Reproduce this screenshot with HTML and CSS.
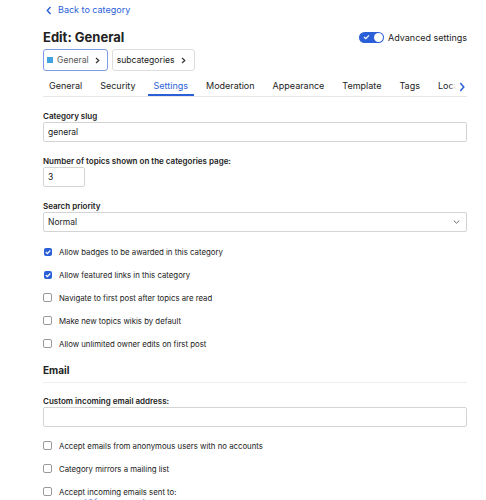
FILE: index.html
```html
<!DOCTYPE html>
<html lang="en">
<head>
  <meta charset="UTF-8" />
  <title>Edit: General</title>
  <link rel="stylesheet" href="styles.css">
</head>
<body>
  <div id="page">
    <a class="back" href="#">
      <svg width="6" height="9" viewBox="0 0 6 9"><path d="M4.5 1 L1.3 4.5 L4.5 8" fill="none" stroke="currentColor" stroke-width="1.4"/></svg>
      Back to category
    </a>

    <div class="header">
      <h1>Edit: General</h1>
      <label class="toggle-row">
        <span class="toggle">
          <svg width="7" height="6" viewBox="0 0 7 6"><path d="M1 3 L2.8 4.7 L6 1.3" fill="none" stroke="#fff" stroke-width="1.2"/></svg>
          <span class="knob"></span>
        </span>
        Advanced settings
      </label>
    </div>

    <div class="crumbs">
      <div class="crumb current">
        <span class="swatch"></span>General
        <svg class="chev" width="5" height="7" viewBox="0 0 5 7"><path d="M1 1 L3.8 3.5 L1 6" fill="none" stroke="#333" stroke-width="1.2"/></svg>
      </div>
      <div class="crumb">subcategories
        <svg class="chev" width="5" height="7" viewBox="0 0 5 7"><path d="M1 1 L3.8 3.5 L1 6" fill="none" stroke="#333" stroke-width="1.2"/></svg>
      </div>
    </div>

    <div class="tabs">
      <div class="tab-list">
        <div class="tab">General</div>
        <div class="tab">Security</div>
        <div class="tab active">Settings</div>
        <div class="tab">Moderation</div>
        <div class="tab">Appearance</div>
        <div class="tab">Template</div>
        <div class="tab">Tags</div>
        <div class="tab">Loca</div>
      </div>
      <div class="tab-more">
        <svg width="6" height="10" viewBox="0 0 6 10"><path d="M1.3 1 L4.8 5 L1.3 9" fill="none" stroke="#2a5fd8" stroke-width="1.5"/></svg>
      </div>
    </div>

    <div class="field">
      <label>Category slug</label>
      <input type="text" value="general" />
    </div>

    <div class="field">
      <label>Number of topics shown on the categories page:</label>
      <input type="text" class="short" value="3" />
    </div>

    <div class="field">
      <label>Search priority</label>
      <div class="select">Normal
        <svg width="7" height="4" viewBox="0 0 7 4"><path d="M0.8 0.6 L3.5 3.2 L6.2 0.6" fill="none" stroke="#666" stroke-width="1"/></svg>
      </div>
    </div>

    <div class="checks">
      <label class="check"><input type="checkbox" checked /> Allow badges to be awarded in this category</label>
      <label class="check"><input type="checkbox" checked /> Allow featured links in this category</label>
      <label class="check"><input type="checkbox" /> Navigate to first post after topics are read</label>
      <label class="check"><input type="checkbox" /> Make new topics wikis by default</label>
      <label class="check"><input type="checkbox" /> Allow unlimited owner edits on first post</label>
    </div>

    <h2>Email</h2>

    <div class="field email-field">
      <label>Custom incoming email address:</label>
      <input type="text" value="" />
    </div>

    <div class="checks email">
      <label class="check"><input type="checkbox" /> Accept emails from anonymous users with no accounts</label>
      <label class="check"><input type="checkbox" /> Category mirrors a mailing list</label>
      <div>
        <label class="check"><input type="checkbox" /> Accept incoming emails sent to:</label>
        <div class="hint">general@forum.example.com</div>
      </div>
    </div>
  </div>
</body>
</html>
```

FILE: styles.css
```css
body {
  font-family: Inter, "Noto Sans", sans-serif;
  margin: 0;
  background: white;
  color: #222;
}

#page {
  width: 424px;
  padding: 3px 0 0 43px;
}

.back {
  display: flex;
  align-items: center;
  gap: 6px;
  font-size: 9px;
  line-height: 14px;
  color: #2a5fd8;
  text-decoration: none;
  padding-left: 3px;
}

.header {
  display: flex;
  justify-content: space-between;
  align-items: center;
  margin-top: 11px;
}

h1 {
  font-size: 13px;
  line-height: 18px;
  margin: 0;
  font-weight: 700;
}

.toggle-row {
  display: flex;
  align-items: center;
  gap: 4px;
  font-size: 9px;
  color: #222;
}

.toggle {
  position: relative;
  display: flex;
  align-items: center;
  width: 25px;
  height: 11px;
  border-radius: 6px;
  background: #2a5fd8;
  padding-left: 4px;
  box-sizing: border-box;
}

.knob {
  position: absolute;
  right: 1px;
  top: 1px;
  width: 9px;
  height: 9px;
  border-radius: 50%;
  background: white;
}

.crumbs {
  display: flex;
  gap: 4px;
  margin-top: 3px;
}

.crumb {
  display: flex;
  align-items: center;
  height: 20px;
  padding: 0 8px 0 4px;
  border: 1px solid #ddd;
  border-radius: 3px;
  font-size: 8.6px;
  color: #222;
}

.crumb.current {
  border-color: #7d9be3;
  color: #555;
  padding-left: 3px;
  padding-right: 7px;
}

.swatch {
  width: 6px;
  height: 6px;
  background: #3fa3dd;
  margin-right: 4px;
}

.chev {
  margin-left: 6px;
}

.tabs {
  position: relative;
  margin-top: 8px;
  border-bottom: 1px solid #e8e8e8;
}

.tab-list {
  display: flex;
  gap: 6px;
  overflow: hidden;
}

.tab {
  padding: 1px 6px 2px;
  font-size: 9px;
  line-height: 12px;
  white-space: nowrap;
  border-bottom: 2px solid transparent;
}

.tab.active {
  color: #2a5fd8;
  border-bottom-color: #2a5fd8;
}

.tab-more {
  position: absolute;
  right: 0;
  top: 0;
  bottom: 2px;
  width: 16px;
  display: flex;
  align-items: center;
  justify-content: flex-end;
  padding-right: 2px;
  background: linear-gradient(to right, rgba(255,255,255,0), white 40%);
}

.field {
  margin-top: 14px;
}

.field.email-field {
  margin-top: 13px;
}

.field label {
  display: block;
  font-size: 8px;
  font-weight: 600;
  line-height: 10px;
  margin-bottom: 1px;
}

input[type=text], .select {
  display: block;
  box-sizing: border-box;
  width: 100%;
  height: 20px;
  border: 1px solid #d4d4d4;
  border-radius: 2px;
  padding: 0 4px;
  font-family: inherit;
  font-size: 8.5px;
  color: #222;
  margin: 0;
}

input.short {
  width: 42px;
}

.select {
  display: flex;
  align-items: center;
  justify-content: space-between;
  padding-right: 6px;
}

.checks {
  display: flex;
  flex-direction: column;
  gap: 12px;
  padding-top: 14px;
}

.checks.email {
  padding-top: 13px;
}

.check {
  display: flex;
  align-items: center;
  gap: 7px;
  height: 11px;
  font-size: 7.8px;
}

.check input {
  appearance: none;
  margin: 0;
  width: 9px;
  height: 9px;
  border: 1px solid #999;
  border-radius: 2px;
  box-sizing: border-box;
}

.check input:checked {
  width: 8px;
  height: 8px;
  margin-left: 1px;
  margin-right: 0;
  border: none;
  background: #2a5fd8 url("data:image/svg+xml;utf8,<svg xmlns='http://www.w3.org/2000/svg' viewBox='0 0 8 8'><path d='M1.8 4 L3.4 5.6 L6.3 2.5' fill='none' stroke='white' stroke-width='1.2'/></svg>") center/8px 8px no-repeat;
}

h2 {
  font-size: 10px;
  line-height: 14px;
  font-weight: 700;
  margin: 14px 0 0;
  padding-bottom: 5px;
  border-bottom: 1px solid #eee;
}

.hint {
  font-size: 7.8px;
  line-height: 11px;
  color: #2a5fd8;
  padding-left: 16px;
}
```
